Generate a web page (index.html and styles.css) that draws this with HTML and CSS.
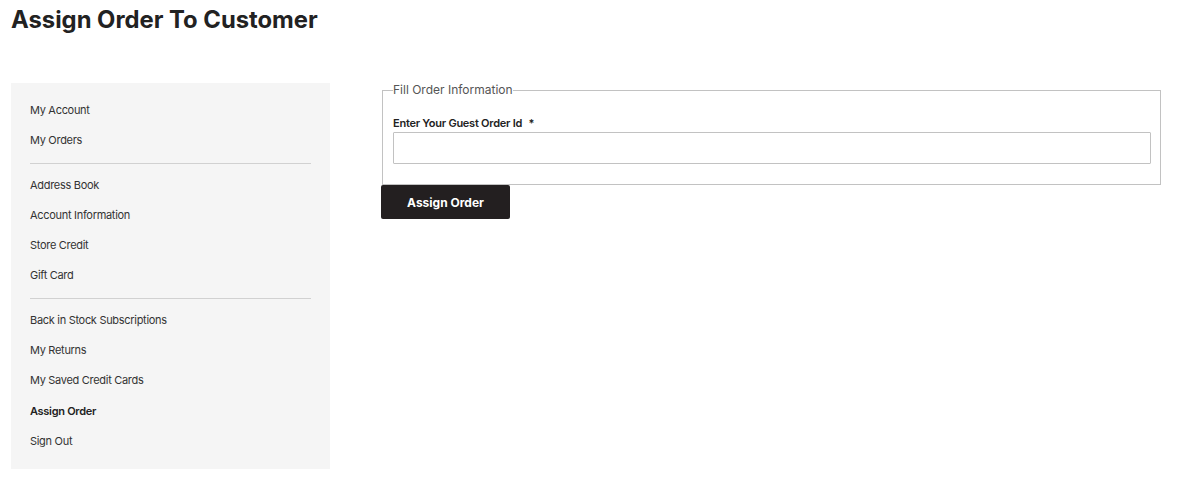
FILE: index.html
```html
<!DOCTYPE html>
<html>
<head>
<meta charset="utf-8">
<link rel="stylesheet" href="styles.css">
</head>
<body>
<h1 class="page-title">Assign Order To Customer</h1>
<div class="columns">
  <nav class="sidebar">
    <ul class="nav-group">
      <li><a href="#">My Account</a></li>
      <li><a href="#">My Orders</a></li>
    </ul>
    <ul class="nav-group">
      <li><a href="#">Address Book</a></li>
      <li><a href="#">Account Information</a></li>
      <li><a href="#">Store Credit</a></li>
      <li><a href="#">Gift Card</a></li>
    </ul>
    <ul class="nav-group">
      <li><a href="#">Back in Stock Subscriptions</a></li>
      <li><a href="#">My Returns</a></li>
      <li><a href="#">My Saved Credit Cards</a></li>
      <li class="current"><strong>Assign Order</strong></li>
      <li><a href="#">Sign Out</a></li>
    </ul>
  </nav>
  <main class="main">
    <form class="assign-form">
      <fieldset class="fieldset">
        <legend class="legend">Fill Order Information</legend>
        <label class="label" for="oid">Enter Your Guest Order Id <span class="req">*</span></label>
        <input class="input" id="oid" type="text">
      </fieldset>
      <button class="btn" type="button">Assign Order</button>
    </form>
  </main>
</div>
</body>
</html>
```
FILE: styles.css
```css
* { box-sizing: border-box; }
html, body { margin: 0; padding: 0; background: #fff; }
body {
  font-family: Inter, "Noto Sans", sans-serif;
  color: #333;
  padding: 0 11px;
}
.page-title {
  margin: 0;
  padding-top: 6px;
  font-size: 23.8px;
  line-height: 28px;
  font-weight: 700;
  color: #222;
}
.columns {
  display: flex;
  align-items: flex-start;
  margin-top: 49px;
}
.sidebar {
  width: 319px;
  flex: none;
  background: #f5f5f5;
  padding: 12px 19px 13px 19px;
}
.nav-group {
  list-style: none;
  margin: 0;
  padding: 0;
}
.nav-group + .nav-group {
  border-top: 1px solid #d1d1d1;
  margin-top: 7px;
  padding-top: 6px;
}
.nav-group li {
  height: 30.3px;
  line-height: 30px;
  font-size: 11px;
  letter-spacing: -0.3px;
}
.nav-group a {
  color: #333;
  text-decoration: none;
}
.nav-group .current strong {
  color: #222;
  font-weight: 600;
}
.main {
  flex: 1;
  padding-left: 51px;
  padding-right: 6px;
}
.assign-form {
  display: flex;
  flex-direction: column;
  align-items: flex-start;
}
.fieldset {
  width: 100%;
  margin: 0 0 0 1px;
  border: 1px solid #c2c2c2;
  padding: 19px 9px 20px 10px;
}
.legend {
  padding: 0;
  font-size: 12px;
  line-height: 14px;
  color: #555;
}
.label {
  display: block;
  font-size: 11px;
  letter-spacing: -0.25px;
  font-weight: 600;
  color: #222;
  line-height: 14px;
  margin-bottom: 2px;
}
.req { margin-left: 4px; }
.input {
  display: block;
  width: 100%;
  height: 32px;
  border: 1px solid #c2c2c2;
  border-radius: 1px;
  font: inherit;
}
.btn {
  width: 129px;
  height: 34px;
  background: #231f20;
  color: #fff;
  border: none;
  border-radius: 2px;
  font-family: Inter, "Noto Sans", sans-serif;
  font-weight: 700;
  font-size: 12px;
  padding: 0;
}
```
